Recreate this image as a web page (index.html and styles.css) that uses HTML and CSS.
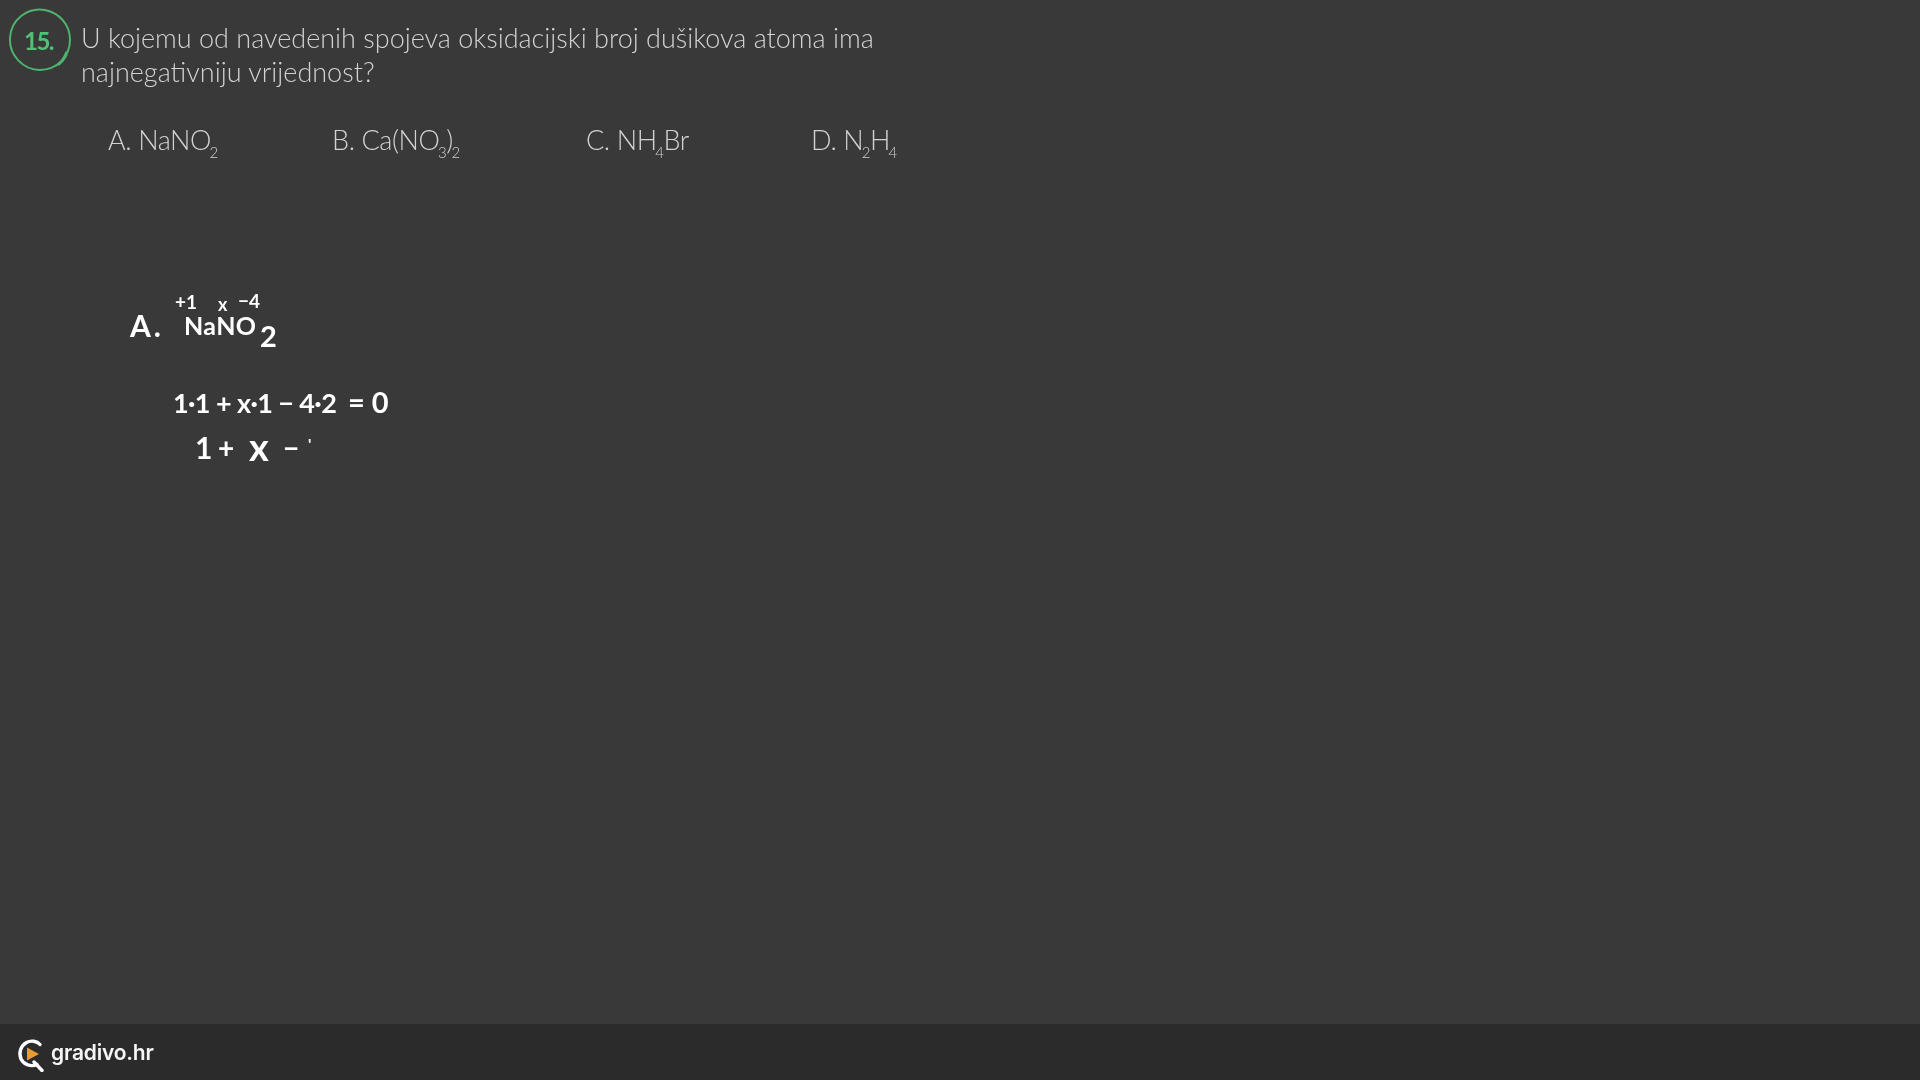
FILE: index.html
```html
<!DOCTYPE html>
<html lang="hr">
<head>
<meta charset="utf-8">
<title>gradivo.hr</title>
<link rel="stylesheet" href="styles.css">
</head>
<body>
<main class="board">
  <header class="question">
    <div class="badge">
      <svg class="badge-ring" width="64" height="64" viewBox="0 0 64 64" fill="none">
        <path d="M37 2C20-1 3 11 2 30 1 47 15 62 32 62 48 62 62 49 62 32 62 16 51 5 37 2Z" stroke="#4fb36d" stroke-width="2"/>
        <path d="M48 58Q54 54 58 44M51 57Q56 53 59 47" stroke="#4fb36d" stroke-width="1.4" stroke-linecap="round"/>
      </svg>
      <span class="badge-num">15.</span>
    </div>
    <p class="question-text">U kojemu od navedenih spojeva oksidacijski broj dušikova atoma ima<br>najnegativniju vrijednost?</p>
  </header>
  <ul class="options">
    <li class="option option-a">A. NaNO<sub>2</sub></li>
    <li class="option option-b">B. Ca(NO<sub>3</sub>)<sub>2</sub></li>
    <li class="option option-c">C. NH<sub>4</sub>Br</li>
    <li class="option option-d">D. N<sub>2</sub>H<sub>4</sub></li>
  </ul>
  <section class="ink">
    <span class="mark m-a">A.</span>
    <span class="mark m-ox1">+1</span>
    <span class="mark m-ox2">x</span>
    <span class="mark m-ox3">−4</span>
    <span class="mark m-formula">NaNO</span>
    <span class="mark m-sub">2</span>
    <span class="mark m-eq1">1·1 + x·1 − 4·2</span>
    <span class="mark m-eq1b">= 0</span>
    <span class="mark m-e1">1</span>
    <span class="mark m-e2">+</span>
    <span class="mark m-e3">x</span>
    <span class="mark m-e4">−</span>
    <span class="mark m-e5">'</span>
  </section>
</main>
<footer class="footer">
  <svg class="logo" width="30" height="34" viewBox="0 0 30 34" fill="none">
    <path d="M24 6.500C21 3 15 2 10.500 4.500 4.500 8 2.500 15 5 21 8 27 15 29 21 26.500" stroke="#fff" stroke-width="3.400" stroke-linecap="round"/>
    <path d="M18 24 26 32.500" stroke="#fff" stroke-width="3.400" stroke-linecap="round"/>
    <path d="M11 9.500 23 16 11 22.500Z" fill="#eb9a2d"/>
  </svg>
  <span class="brand">gradivo.hr</span>
</footer>
</body>
</html>
```
FILE: styles.css
```css
* { box-sizing: border-box; }
html, body { margin: 0; height: 100%; }
body {
  width: 1920px;
  height: 1080px;
  background: #393939;
  display: flex;
  flex-direction: column;
  overflow: hidden;
  font-family: "Lato", "Liberation Sans", sans-serif;
}
.board { flex: 1; position: relative; min-height: 0; }
.question { display: flex; align-items: flex-start; gap: 9px; padding: 8px 0 0 8px; }
.badge { position: relative; width: 64px; height: 64px; flex: none; }
.badge-ring { display: block; }
.badge-num {
  position: absolute; left: 16px; top: 18px;
  color: #4fc274; font-size: 24px; font-weight: 700; letter-spacing: -1.500px;
  filter: blur(.4px);
}
.question-text {
  margin: 13px 0 0;
  color: #d2d2d2;
  font-size: 27px;
  font-weight: 300;
  line-height: 34px;
  letter-spacing: 0;
  white-space: nowrap;
  filter: blur(.4px);
}
.options {
  list-style: none;
  margin: 31px 0 0;
  padding: 0 0 0 108px;
  display: flex;
  color: #d2d2d2;
  font-size: 27px;
  font-weight: 300;
  line-height: 40px;
  letter-spacing: -.4px;
  filter: blur(.4px);
}
.option-a { width: 224px; }
.option-b { width: 254px; }
.option-c { width: 225px; }
sub { font-size: 15px; line-height: 0; vertical-align: -8px; margin-left: -1.500px; }
.ink { position: absolute; inset: 0; filter: blur(.5px); }
.mark {
  position: absolute;
  color: #fff;
  font-family: "Lato", sans-serif;
  font-weight: 700;
  white-space: nowrap;
  line-height: .75;
}
.m-a { left: 130px; top: 314px; font-size: 30px; letter-spacing: 3px; }
.m-ox1 { left: 175px; top: 295px; font-size: 19px; }
.m-ox2 { left: 218px; top: 298px; font-size: 18px; }
.m-ox3 { left: 238px; top: 294px; font-size: 19px; }
.m-formula { left: 184px; top: 316px; font-size: 25px; letter-spacing: .4px; }
.m-sub { left: 260px; top: 325px; font-size: 29px; }
.m-eq1 { left: 173px; top: 393px; font-size: 27px; letter-spacing: -.6px; }
.m-eq1b { left: 348px; top: 391px; font-size: 29px; }
.m-e1 { left: 195px; top: 436px; font-size: 30px; }
.m-e2 { left: 218px; top: 437px; font-size: 28px; }
.m-e3 { left: 249px; top: 432px; font-size: 38px; }
.m-e4 { left: 283px; top: 437px; font-size: 28px; }
.m-e5 { left: 308px; top: 438px; font-size: 16px; }
.footer {
  height: 56px;
  flex: none;
  background: #2b2b2b;
  display: flex;
  align-items: center;
  gap: 5px;
  padding: 0 0 0 16px;
}
.logo { display: block; margin-top: 6px; }
.brand {
  color: #f5f5f5;
  font-family: "Inter", sans-serif;
  font-size: 21px;
  font-weight: 600;
  letter-spacing: -.2px;
  filter: blur(.3px);
}
```
